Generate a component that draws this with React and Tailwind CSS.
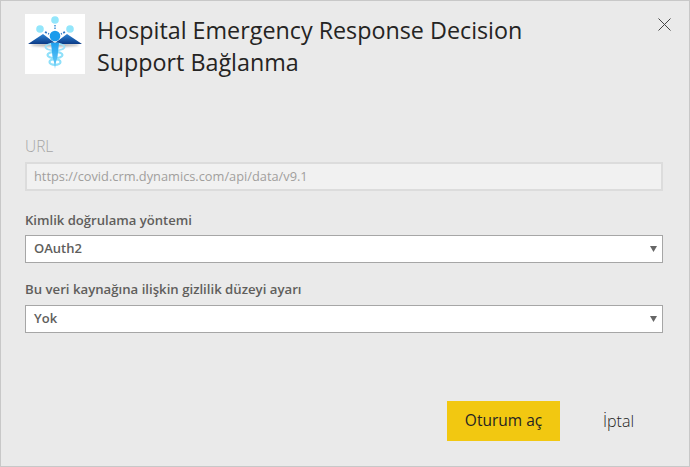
function Logo() {
  return (
    <div className="w-[60px] h-[60px] bg-white shrink-0">
      <svg width="60" height="60" viewBox="0 0 60 60">
        <defs>
          <linearGradient id="wing" x1="0" y1="0" x2="0" y2="1">
            <stop offset="0" stopColor="#2f86d6" />
            <stop offset="1" stopColor="#0b3a86" />
          </linearGradient>
          <linearGradient id="staff" x1="0" y1="0" x2="0" y2="1">
            <stop offset="0" stopColor="#1fa0ee" />
            <stop offset="1" stopColor="#6fd0f8" />
          </linearGradient>
          <filter id="soft" x="-30%" y="-200%" width="160%" height="500%"><feGaussianBlur stdDeviation="1.200" /></filter>
        </defs>
        <ellipse cx="30" cy="31" rx="24" ry="1.800" fill="#b8b8b8" filter="url(#soft)" />
        <path d="M3 30 L18 20 L30 29 L42 20 L57 30 Z" fill="url(#wing)" />
        <ellipse cx="30" cy="33" rx="9.500" ry="3.500" fill="none" stroke="#9be2fb" strokeWidth="1.800" />
        <ellipse cx="30" cy="41" rx="7.500" ry="3.200" fill="none" stroke="#8fe0fa" strokeWidth="2.200" />
        <ellipse cx="30" cy="48" rx="5.500" ry="2.800" fill="none" stroke="#8fe0fa" strokeWidth="2.200" />
        <path d="M26 29h8l-1.500 14-1.500 5-1 7-1-7-1.500-5Z" fill="url(#staff)" />
        <circle cx="30" cy="22" r="5.300" fill="#1a9bec" />
        <circle cx="30" cy="6" r="3.800" fill="#93e6fb" />
        <circle cx="15" cy="15" r="3.800" fill="#93e6fb" />
        <circle cx="45" cy="15" r="3.800" fill="#93e6fb" />
        <path d="M30 11v5" stroke="#3a8fd8" strokeWidth="1.500" strokeDasharray="1.500 1" />
        <path d="M20 18l4 2M40 18l-4 2" stroke="#2a74c4" strokeWidth="1.800" strokeDasharray="2 1.500" />
      </svg>
    </div>
  );
}

function Select({ value }) {
  return (
    <div className="h-[28px] border border-[#a6a6a6] bg-white flex items-center justify-between pl-[8px] pr-[5px]">
      <span className="text-[13px] font-semibold text-[#605e5c]">{value}</span>
      <svg width="7" height="6" viewBox="0 0 7 6"><path d="M0 0h7L3.500 6Z" fill="#666" /></svg>
    </div>
  );
}

export default function App() {
  return (
    <div
      className="w-[690px] h-[467px] bg-[#eaeaea] border border-[#c8c8c8] flex flex-col pl-[24px] pr-[26px] overflow-hidden relative"
      style={{ fontFamily: '"Open Sans", "Noto Sans", sans-serif' }}
    >
      <div className="flex gap-[12px] pt-[13px] h-[130px]">
        <Logo />
        <h1 className="text-[23.300px] leading-[32px] font-normal text-[#252423] w-[440px]">
          Hospital Emergency Response Decision Support Bağlanma
        </h1>
      </div>
      <button className="absolute right-[18px] top-[17px] w-[13px] h-[13px] text-[#444]" aria-label="Kapat">
        <svg width="13" height="13" viewBox="0 0 13 13"><path d="M.5.5l12 12M12.500.5l-12 12" stroke="currentColor" strokeWidth="1" fill="none" /></svg>
      </button>
      <label className="text-[15.500px] leading-[24px] font-light text-[#a6a6a6] mt-[3px]">URL</label>
      <div className="h-[29px] mt-[4px] border-2 border-[#dcdcdc] bg-[#f1f1f1] flex items-center pl-[7px] text-[12.800px] text-[#a19f9d]">
        https://covid.crm.dynamics.com/api/data/v9.1
      </div>
      <label className="text-[13.100px] leading-[18px] font-semibold text-[#605e5c] mt-[20px] mb-[6px]">Kimlik doğrulama yöntemi</label>
      <Select value="OAuth2" />
      <label className="text-[13.200px] leading-[18px] font-semibold text-[#605e5c] mt-[17px] mb-[7px]">Bu veri kaynağına ilişkin gizlilik düzeyi ayarı</label>
      <Select value="Yok" />
      <div className="flex items-center mt-[68px] pl-[422px]">
        <button className="w-[113px] h-[40px] bg-[#f2c811] text-[15.500px] text-[#252423]">Oturum aç</button>
        <button className="ml-[43px] text-[16px] text-[#252423] font-light">İptal</button>
      </div>
    </div>
  );
}
